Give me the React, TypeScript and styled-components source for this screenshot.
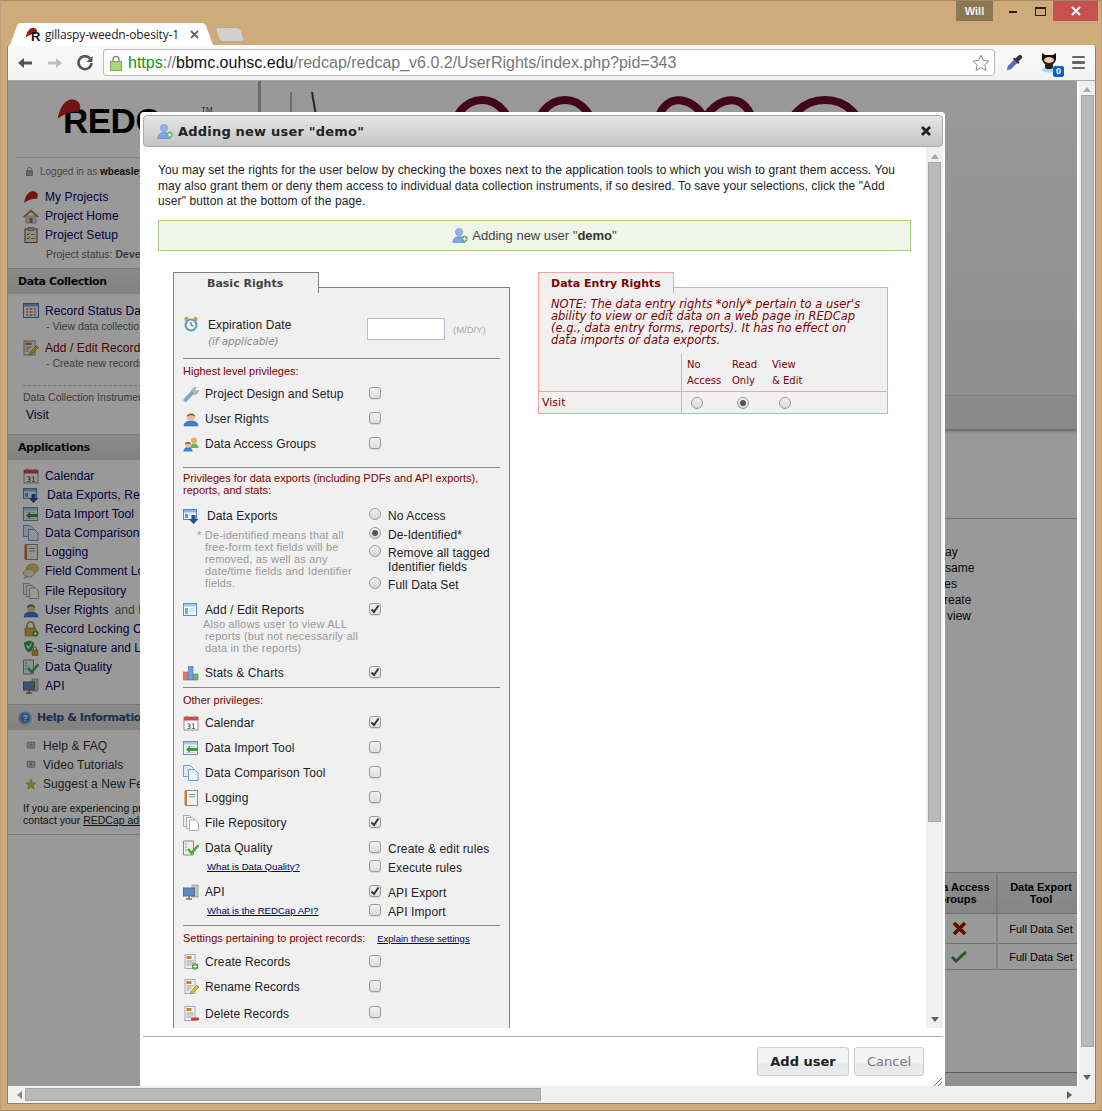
import { FC, ReactNode } from "react";
import styled, { createGlobalStyle } from "styled-components";

const SANS = `"Liberation Sans", Arial, sans-serif`;
const VERDANA = `"DejaVu Sans", Verdana, sans-serif`;

const GlobalStyle = createGlobalStyle`
  html, body { margin: 0; padding: 0; background: #cdab7b; }
  * { box-sizing: border-box; }
  body { font-family: ${SANS}; font-size: 12px; color: #000; }
`;

const HAT_PATH = "M1 14C2 9 4 4 8 2.500C11 1.500 15 3 15 7L13.500 10C10 9 5 11 1 14z";

const icons: Record<string, ReactNode> = {
  hat: <path d={HAT_PATH} fill="#8f1d1d" />,
  hatBright: <path d={HAT_PATH} fill="#c41e1e" />,
  userAdd: (
    <>
      <circle cx="7" cy="5" r="3.600" fill="#8fb2ea" stroke="#6f93d6" strokeWidth=".6" />
      <path d="M.8 15.500C1 11.500 3.500 9.500 7 9.500s6 2 6.200 6z" fill="#7fa3e3" stroke="#5b80c6" strokeWidth=".6" />
      <circle cx="12.600" cy="11.800" r="3" fill="#58b65a" />
      <path d="M12.600 10v3.600M10.800 11.800h3.600" stroke="#fff" strokeWidth="1.200" />
    </>
  ),
  clock: (
    <>
      <circle cx="3.500" cy="3" r="2.200" fill="#e0a030" />
      <circle cx="12.500" cy="3" r="2.200" fill="#e0a030" />
      <circle cx="8" cy="9" r="6.500" fill="#5b9bd8" />
      <circle cx="8" cy="9" r="4.400" fill="#f4f4f4" />
      <path d="M8 6v3l2.500 1" stroke="#555" fill="none" />
    </>
  ),
  wrench: (
    <>
      <path d="M2.500 14L9.500 6.500" stroke="#7ea2dc" strokeWidth="4" strokeLinecap="round" />
      <path d="M8.500 5.500C8.500 3 10.500 1 13.500 1.500L11.500 3.500 13 5.500 15.500 4C15.500 7 13 9 10.500 8.500z" fill="#b4b4b4" stroke="#888" strokeWidth=".5" />
    </>
  ),
  user: (
    <>
      <path d="M1 15c0-3.500 2.500-5 7-5s7 1.500 7 5z" fill="#3f7fd6" stroke="#2b5fa8" strokeWidth=".5" />
      <circle cx="8" cy="6" r="4" fill="#efbf9a" />
      <path d="M4 6C3.500 1.500 12.500 1.500 12 6 10 3.800 6 3.800 4 6z" fill="#8a4a22" />
    </>
  ),
  users: (
    <>
      <circle cx="11" cy="4.500" r="3" fill="#e8b060" />
      <path d="M7 12c0-3 2-4.500 4-4.500s4.500 1.500 4.500 4.500z" fill="#6cb45c" />
      <path d="M.5 15.500C.5 12.500 2.500 11 5 11s4.500 1.500 4.500 4.500z" fill="#3f7fd6" />
      <circle cx="5" cy="8.500" r="3" fill="#efbf9a" />
      <path d="M2 8.500C2 5 8 5 8 8.500 6.500 7 3.500 7 2 8.500z" fill="#8a4a22" />
    </>
  ),
  exports: (
    <>
      <rect x=".5" y="1.500" width="13" height="10" fill="#e8f0fa" stroke="#5a86c4" />
      <rect x="1" y="2" width="12" height="2.500" fill="#8fb2e0" />
      <rect x="2" y="6" width="3" height="4" fill="#6c94cc" />
      <path d="M8.500 7h4v4h3l-5 5-5-5h3z" fill="#2a4f8c" />
    </>
  ),
  report: (
    <>
      <rect x=".5" y="1.500" width="13" height="12" fill="#f4f8fd" stroke="#5a8cd0" />
      <rect x="1" y="2" width="12" height="2.500" fill="#a8c6ea" />
      <rect x="2" y="6" width="3" height="6" fill="#7ea8dc" />
      <path d="M6.500 7h5.500M6.500 9h5.500" stroke="#b8cfe8" />
    </>
  ),
  chart: (
    <>
      <rect x=".5" y="7" width="4.500" height="8" fill="#ef6f6f" stroke="#c44" strokeWidth=".6" />
      <rect x="5.500" y="1.500" width="4.500" height="13.500" fill="#6f9fe0" stroke="#3d6cb4" strokeWidth=".6" />
      <rect x="10.500" y="9" width="4.500" height="6" fill="#6cb46c" stroke="#3d8a3d" strokeWidth=".6" />
    </>
  ),
  calendar: (
    <>
      <rect x="1" y="2" width="14" height="13" fill="#fafafa" stroke="#777" strokeWidth=".8" />
      <rect x="1" y="2" width="14" height="3.500" fill="#e04444" />
      <path d="M4 .8v3M12 .8v3" stroke="#888" strokeWidth="1.200" />
      <text x="8" y="13.500" textAnchor="middle" fontSize="7.500" fontFamily="DejaVu Sans Mono, monospace" fill="#333">31</text>
    </>
  ),
  importTool: (
    <>
      <rect x=".5" y="1.500" width="14" height="13" fill="#eef4ea" stroke="#6f93b8" />
      <rect x="1" y="2" width="13" height="2.500" fill="#a8c6ea" />
      <path d="M3 6.500h9M3 12.500h9" stroke="#b8cfe8" />
      <path d="M15 8h-8V6L3 9.500 7 13v-2h8z" fill="#3f9a3f" />
    </>
  ),
  compare: (
    <>
      <path d="M.5.500h7l3 3v8h-10z" fill="#dbe8f8" stroke="#6f9ad4" />
      <path d="M5.500 4.500h6l3.500 3.500v7.500h-9.500z" fill="#eef4fc" stroke="#6f9ad4" />
    </>
  ),
  log: (
    <>
      <rect x="2.500" y=".5" width="12" height="15" fill="#f6f3ea" stroke="#8f8a7a" />
      <rect x="1.500" y="1" width="2.500" height="14" fill="#c67b3c" />
      <path d="M6 4.500h6M6 7h6" stroke="#6f9ad4" strokeWidth="1.200" />
    </>
  ),
  repo: (
    <>
      <path d="M.5.500h6l2 2v9h-8z" fill="#f2f2f2" stroke="#aaa" />
      <path d="M3.500 2.500h6l2 2v9h-8z" fill="#f8f8f8" stroke="#aaa" />
      <path d="M6.500 5h6l3 3v7.500h-9z" fill="#fff" stroke="#aaa" />
    </>
  ),
  quality: (
    <>
      <path d="M.5 1h10v14H.5z" fill="#eee" stroke="#888" />
      <path d="M2 4h2M2 7h2M2 10h2" stroke="#6f9ad4" />
      <path d="M5 9l3.500 4L15.500 5" stroke="#4caf3c" strokeWidth="2.600" fill="none" />
    </>
  ),
  api: (
    <>
      <rect x="9" y="1" width="6" height="12" fill="#c8c8c8" stroke="#888" strokeWidth=".7" />
      <rect x=".5" y="4" width="11" height="8" fill="#5a8cc8" stroke="#666" />
      <path d="M3 15h6M6 12v3" stroke="#777" strokeWidth="1.500" />
    </>
  ),
  recordAdd: (
    <>
      <rect x="2" y=".5" width="10" height="14" fill="#f4f2ec" stroke="#aaa" />
      <rect x="3.500" y="2" width="5" height="3" fill="#c8822c" />
      <path d="M3.500 7h7M3.500 9h7M3.500 11h5" stroke="#999" />
      <circle cx="12" cy="12.500" r="3.200" fill="#3fa33f" />
      <path d="M12 10.500v4M10 12.500h4" stroke="#fff" />
    </>
  ),
  recordEdit: (
    <>
      <rect x="2" y=".5" width="10" height="14" fill="#f4f2ec" stroke="#aaa" />
      <rect x="3.500" y="2" width="5" height="3" fill="#c8822c" />
      <path d="M3.500 7h7M3.500 9h5M3.500 11h3" stroke="#999" />
      <path d="M7 15l1-3 6-6 2 2-6 6z" fill="#e6b422" stroke="#8a6d1a" strokeWidth=".5" />
    </>
  ),
  recordDelete: (
    <>
      <rect x="2" y=".5" width="10" height="14" fill="#f4f2ec" stroke="#aaa" />
      <rect x="3.500" y="2" width="5" height="3" fill="#c8822c" />
      <path d="M3.500 7h7M3.500 9h7M3.500 11h5" stroke="#999" />
      <rect x="8" y="11.500" width="8" height="3" rx="1" fill="#d43c3c" />
    </>
  ),
  home: (
    <>
      <path d="M3 8h10v7H3z" fill="#ddd" stroke="#888" strokeWidth=".6" />
      <path d="M0 8.500L8 1.500l8 7-1.500 1L8 4 1.500 9.500z" fill="#c87a28" />
      <rect x="6.500" y="10" width="3" height="5" fill="#778" />
    </>
  ),
  clipboard: (
    <>
      <rect x="2" y="2" width="12" height="13.500" fill="#f0eadc" stroke="#7a4a20" />
      <rect x="5" y=".5" width="6" height="3" fill="#aaa" stroke="#666" strokeWidth=".5" />
      <path d="M4 7l1 1 1.500-2M4 11l1 1 1.500-2" stroke="#3a9a3a" fill="none" />
      <path d="M8 7.500h4M8 11.500h4" stroke="#888" />
    </>
  ),
  grid: (
    <>
      <rect x=".5" y=".5" width="15" height="14" fill="#f0f4fa" stroke="#4a78b8" />
      <rect x="1" y="1" width="14" height="2.500" fill="#7aa0d8" />
      <path d="M3 6h2M6.500 6h3M11 6h2M3 9h2M6.500 9h3M11 9h2M3 12h2M6.500 12h3M11 12h2" stroke="#c87a50" strokeWidth="1.400" />
    </>
  ),
  edit: (
    <>
      <rect x="1" y="1" width="11" height="14" fill="#f4f2ec" stroke="#888" />
      <rect x="2.500" y="2.500" width="6" height="2.500" fill="#b87a30" />
      <path d="M2.500 7h7M2.500 9h5M2.500 11h3" stroke="#999" />
      <path d="M6 15.500l1-3.500 6.500-6.500 2 2L9 14z" fill="#e6b422" stroke="#8a6d1a" strokeWidth=".5" />
    </>
  ),
  comment: (
    <>
      <ellipse cx="9.500" cy="5.500" rx="6" ry="4.500" fill="#e8c868" stroke="#a08a40" strokeWidth=".7" />
      <ellipse cx="6" cy="10" rx="5.500" ry="4" fill="#f4e8c8" stroke="#a08a40" strokeWidth=".7" />
      <path d="M3 13l-2 2.500 4-1.500z" fill="#f4e8c8" stroke="#a08a40" strokeWidth=".5" />
    </>
  ),
  lockAdd: (
    <>
      <path d="M4 7V4.500a3.500 3.500 0 0 1 7 0V7" stroke="#a08a40" strokeWidth="1.500" fill="none" />
      <rect x="2" y="7" width="11" height="8" fill="#d8b048" stroke="#8a6d1a" strokeWidth=".6" />
      <circle cx="12.500" cy="12.500" r="3" fill="#3fa33f" />
      <path d="M12.500 10.800v3.400M10.800 12.500h3.400" stroke="#fff" />
    </>
  ),
  shield: (
    <>
      <path d="M1 2.500L6 .5l5 2c0 5-2 8-5 10-3-2-5-5-5-10z" fill="#3aa04a" />
      <path d="M3.500 5.500L5.500 8 8.500 3.500" stroke="#fff" strokeWidth="1.300" fill="none" />
      <rect x="9" y="10" width="6" height="5.500" fill="#c8a040" stroke="#8a6d1a" strokeWidth=".5" />
      <path d="M10.500 10V8.500a1.500 1.500 0 0 1 3 0V10" stroke="#8a6d1a" fill="none" />
    </>
  ),
  help: (
    <>
      <circle cx="8" cy="8" r="7.500" fill="#7ea8dc" />
      <circle cx="8" cy="8" r="5" fill="#4f7fc0" />
      <text x="8" y="11.500" textAnchor="middle" fontSize="10" fontWeight="700" fontFamily="Liberation Sans, sans-serif" fill="#fff">?</text>
    </>
  ),
  doc: (
    <>
      <rect x="3" y="3" width="10" height="8" rx="1" fill="#d8d8d8" stroke="#777" />
      <path d="M5 5.500h6M5 8h6" stroke="#777" />
    </>
  ),
  film: (
    <>
      <rect x="3" y="3" width="10" height="8" rx="1" fill="#d8d8d8" stroke="#777" />
      <path d="M8 4.500v5M5.500 7h5" stroke="#777" />
    </>
  ),
  star: <path d="M8 1.500l2 4.500 4.800.5-3.600 3.200 1 4.800L8 12.100 3.800 14.500l1-4.800L1.200 6.500 6 6z" fill="#e0c040" stroke="#a08a20" strokeWidth=".5" />,
  padlock: (
    <>
      <path d="M5 7V5a3 3 0 0 1 6 0v2" stroke="#777" fill="none" />
      <rect x="3.500" y="7" width="9" height="7" fill="#aaa" stroke="#777" />
    </>
  ),
};

const IconBox = styled.svg<{ $size: number }>`
  width: ${(p) => p.$size}px;
  height: ${(p) => p.$size}px;
  flex: none;
  display: block;
`;

const Icon: FC<{ name: string; size?: number }> = ({ name, size = 16 }) => (
  <IconBox viewBox="0 0 16 16" $size={size}>
    {icons[name]}
  </IconBox>
);

const Window = styled.div`
  width: 1102px;
  height: 1111px;
  background: #cdab7b;
  border: 1px solid #a08a66;
  border-left-color: #b9a07a;
  border-right-color: #b9a07a;
  overflow: hidden;
`;

const TabStrip = styled.div`
  height: 44px;
  display: flex;
  justify-content: space-between;
  padding-left: 19px;
  padding-right: 3px;
`;

const Tabs = styled.div`
  display: flex;
  align-items: flex-end;
`;

const Tab = styled.div`
  position: relative;
  width: 182px;
  height: 22px;
  background: #fff;
  display: flex;
  align-items: center;
  padding-left: 5px;
  font-size: 12px;
  color: #333;
  &::before,
  &::after {
    content: "";
    position: absolute;
    top: 0;
    bottom: 0;
    width: 14px;
    background: #fff;
    border-radius: 3px 3px 0 0;
  }
  &::before {
    left: -6px;
    transform: skewX(-20deg);
  }
  &::after {
    right: -7px;
    transform: skewX(20deg);
  }
`;

const Favicon = styled.span`
  position: relative;
  width: 16px;
  height: 16px;
  z-index: 1;
  flex: none;
`;

const FaviconLetter = styled.span`
  position: absolute;
  left: 6px;
  top: 3px;
  font: bold 13px ${SANS};
  color: #111;
`;

const TabTitle = styled.span`
  position: relative;
  z-index: 1;
  margin-left: 4px;
  width: 136px;
  white-space: nowrap;
  overflow: hidden;
  font-family: "Open Sans", sans-serif;
  font-size: 12px;
  letter-spacing: -0.15px;
  color: #222;
`;

const TabClose = styled.svg`
  position: relative;
  z-index: 1;
  width: 9px;
  height: 9px;
  margin-left: 9px;
`;

const NewTab = styled.div`
  width: 26px;
  height: 15px;
  margin: 0 0 3px 15px;
  background: #d2d2ca;
  border: 1px solid #b8aa90;
  border-radius: 3px;
  transform: skewX(20deg);
`;

const WindowControls = styled.div`
  display: flex;
  height: 20px;
  align-items: stretch;
`;

const UserBadge = styled.div`
  width: 37px;
  background: #8d7654;
  color: #eee;
  font: bold 11px/20px ${SANS};
  text-align: center;
`;

const ControlButton = styled.div<{ $width: number }>`
  width: ${(p) => p.$width}px;
  display: flex;
  align-items: center;
  justify-content: center;
`;

const CloseButton = styled(ControlButton)`
  background: #c75050;
  margin-left: 6px;
`;

const Frame = styled.div`
  margin-left: 6px;
  width: 1089px;
  border: 1px solid #94805f;
  border-top: 0;
  border-radius: 3px 3px 0 0;
  background: #f0f0f0;
`;

const Toolbar = styled.div`
  height: 36px;
  display: flex;
  align-items: center;
  padding-left: 9px;
  background: linear-gradient(#fafafa, #f2f2f2);
  border-bottom: 1px solid #a8a8a8;
  border-top-right-radius: 3px;
  border-top-left-radius: 3px;
`;

const NavIcon = styled.svg`
  width: 16px;
  height: 16px;
  margin-right: 14px;
  flex: none;
`;

const UrlBar = styled.div`
  width: 892px;
  height: 27px;
  margin-left: -4px;
  padding: 0 4px 0 6px;
  background: #fff;
  border: 1px solid #bdbdbd;
  border-radius: 3px;
  display: flex;
  align-items: center;
  font: 16px ${SANS};
  color: #777;
`;

const LockIcon = styled.svg`
  width: 12px;
  height: 16px;
  margin-right: 6px;
`;

const Scheme = styled.span`
  color: #0a9a0a;
`;

const Host = styled.span`
  color: #111;
`;

const UrlText = styled.span`
  flex: 1;
  white-space: nowrap;
`;

const Extensions = styled.div`
  display: flex;
  align-items: center;
  margin-left: 10px;
`;

const Octo = styled.div`
  position: relative;
  width: 22px;
  height: 24px;
  margin: 0 11px 0 16px;
`;

const OctoCount = styled.span`
  position: absolute;
  right: -3px;
  bottom: -2px;
  width: 11px;
  height: 11px;
  background: #0a62c8;
  border-radius: 2px;
  color: #fff;
  font: bold 9px/11px ${SANS};
  text-align: center;
`;

const MenuBars = styled.div`
  width: 13px;
  display: flex;
  flex-direction: column;
  gap: 3px;
`;

const MenuBar = styled.i`
  display: block;
  height: 2.5px;
  background: #666;
  border-radius: 1px;
`;

const ViewportRow = styled.div`
  display: flex;
  height: 1005px;
`;

const Page = styled.div`
  position: relative;
  width: 1069px;
  height: 1005px;
  background: #fff;
  overflow: hidden;
  display: flex;
`;

const Overlay = styled.div`
  position: absolute;
  inset: 0;
  background: rgba(0, 0, 0, 0.4);
`;

const Scrollbar = styled.div`
  flex: none;
  width: 18px;
  background: #f0f0f0;
  display: flex;
  flex-direction: column;
  align-items: center;
  padding-top: 6px;
  border-left: 2px solid #fff;
`;

const ArrowUp = styled.i`
  width: 0;
  height: 0;
  border: 4px solid transparent;
  border-top: 0;
  border-bottom: 5px solid #a8a8a8;
  margin-bottom: 3px;
`;

const ArrowDown = styled.i`
  width: 0;
  height: 0;
  border: 4px solid transparent;
  border-bottom: 0;
  border-top: 5px solid #606060;
`;

const PageThumb = styled.div`
  width: 13px;
  height: 952px;
  margin-bottom: 28px;
  background: #b9b9b9;
  border: 1px solid #a6a6a6;
`;

const HScrollbar = styled.div`
  height: 17px;
  display: flex;
  align-items: center;
  padding-left: 9px;
  background: #f0f0f0;
`;

const ArrowLeft = styled.i`
  width: 0;
  height: 0;
  border: 4px solid transparent;
  border-left: 0;
  border-right: 5px solid #8a8a8a;
  margin-right: 3px;
`;

const ArrowRight = styled.i`
  width: 0;
  height: 0;
  border: 4px solid transparent;
  border-right: 0;
  border-left: 5px solid #606060;
  margin-left: 526px;
`;

const HThumb = styled.div`
  width: 516px;
  height: 13px;
  background: #b9b9b9;
  border: 1px solid #a6a6a6;
`;

const Sidebar = styled.aside`
  flex: none;
  width: 253px;
  height: 100%;
  background: #fff;
  border-right: 3px solid #b4b4b4;
`;

const LogoArea = styled.div`
  position: relative;
  height: 77px;
  margin: 0 6px 0 8px;
  border-bottom: 1px solid #ddd;
`;

const LogoWord = styled.div`
  position: absolute;
  left: 47px;
  top: 20px;
  font: bold 35px/40px ${SANS};
  letter-spacing: -0.5px;
  color: #000;
`;

const LogoHat = styled.div`
  position: absolute;
  left: 40px;
  top: 15px;
`;

const LogoMark = styled.sup`
  position: absolute;
  left: 185px;
  top: 24px;
  font: 8px ${SANS};
  color: #444;
`;

const LoggedIn = styled.div`
  display: flex;
  align-items: center;
  gap: 5px;
  height: 14px;
  margin: 6px 0 9px 16px;
  font-size: 10px;
  color: #777;
  white-space: nowrap;
  b {
    color: #222;
  }
`;

const SideRow = styled.div<{ $color?: string; $indent?: number; $top?: number; $textGap?: number; $h?: number }>`
  display: flex;
  align-items: center;
  height: ${(p) => p.$h ?? 19}px;
  margin-top: ${(p) => p.$top ?? 0}px;
  padding-left: ${(p) => p.$indent ?? 15}px;
  color: ${(p) => p.$color ?? "#000066"};
  font-size: 12px;
  letter-spacing: 0.08px;
  white-space: nowrap;
  svg {
    margin-right: ${(p) => p.$textGap ?? 6}px;
  }
`;

const Muted = styled.span`
  color: #666;
  margin-left: 6px;
`;

const SideSmall = styled.div<{ $top?: number; $left?: number }>`
  font-size: 10.5px;
  line-height: 12px;
  color: #666;
  margin-top: ${(p) => p.$top ?? 0}px;
  padding-left: ${(p) => p.$left ?? 38}px;
  white-space: nowrap;
`;

const SideHeader = styled.div<{ $top: number; $color?: string }>`
  height: 26px;
  margin-top: ${(p) => p.$top}px;
  padding-left: 10px;
  border-top: 1px solid #ccc;
  background: linear-gradient(#e6e6e6, #d8d8d8);
  display: flex;
  align-items: center;
  gap: 5px;
  font: bold 11px ${VERDANA};
  letter-spacing: -0.4px;
  color: ${(p) => p.$color ?? "#111"};
  white-space: nowrap;
`;

const SideList = styled.div<{ $top: number }>`
  margin-top: ${(p) => p.$top}px;
`;

const Dashed = styled.div`
  margin: 16px 0 0 15px;
  border-top: 1px dashed #bbb;
`;

const SideParagraph = styled.div`
  margin: 9px 0 0 15px;
  font-size: 10.5px;
  line-height: 12px;
  color: #222;
  white-space: nowrap;
`;

const SideRule = styled.div`
  margin-top: 8px;
  border-top: 1px solid #ccc;
`;

const Main = styled.main`
  flex: 1;
  min-width: 0;
  display: flex;
  flex-direction: column;
`;

const Banner = styled.div`
  height: 315px;
  background: linear-gradient(#fff, #eee);
  border-bottom: 1px solid #ddd;
`;

const BannerArt = styled.svg`
  display: block;
  width: 816px;
  height: 40px;
`;

const Strip = styled.div`
  height: 33px;
  background: #e8e8e8;
  box-shadow: 0 2px 3px rgba(0, 0, 0, 0.35);
`;

const SectionRule = styled.div`
  margin-top: 89px;
  border-top: 1px solid #bbb;
`;

const NotesBlock = styled.div`
  margin: 25px 0 0 669px;
  font-size: 12px;
  line-height: 16px;
  color: #111;
  white-space: nowrap;
`;

const NoteLine = styled.div<{ $indent: number }>`
  margin-left: ${(p) => p.$indent}px;
`;

const UsersTable = styled.div`
  margin: 248px -9px 0 auto;
  width: 168px;
  display: grid;
  grid-template-columns: 80px 88px;
  font-size: 11px;
  flex: none;
`;

const HeadCell = styled.div`
  height: 42px;
  background: linear-gradient(#eee, #ddd);
  border-top: 1px solid #bbb;
  border-bottom: 1px solid #bbb;
  border-right: 2px solid #ccc;
  display: flex;
  align-items: center;
  justify-content: center;
  text-align: center;
  font-weight: bold;
  line-height: 12px;
`;

const BodyCell = styled.div<{ $height: number; $shift?: number }>`
  height: ${(p) => p.$height}px;
  padding-left: ${(p) => p.$shift ?? 0}px;
  border-bottom: 1px solid #bbb;
  border-right: 2px solid #ddd;
  display: flex;
  align-items: center;
  justify-content: center;
`;

const PageFoot = styled.div`
  margin-top: auto;
  height: 14px;
  background: #f0f0f0;
  border-top: 1px solid #999;
`;

const Dialog = styled.section`
  position: absolute;
  left: 132px;
  top: 31px;
  width: 805px;
  height: 974px;
  padding: 3px 2px 0 3px;
  background: #fff;
  border-radius: 4px 4px 0 0;
  display: flex;
  flex-direction: column;
`;

const TitleBar = styled.header`
  flex: none;
  height: 32px;
  padding: 0 11px 0 13px;
  background: linear-gradient(#e6e6e6, #c4c4c4);
  border: 1px solid #aaa;
  border-radius: 4px;
  display: flex;
  align-items: center;
  justify-content: space-between;
`;

const TitleText = styled.h1`
  margin: 0;
  display: flex;
  align-items: center;
  gap: 5px;
  font: bold 13px ${VERDANA};
  letter-spacing: 0.2px;
  color: #222;
`;

const DialogBody = styled.div`
  height: 881px;
  flex: none;
  display: flex;
`;

const ScrollPane = styled.div`
  flex: 1;
  min-width: 0;
  overflow: hidden;
  padding: 15px 0 0 15px;
`;

const PaneScrollbar = styled.div`
  flex: none;
  width: 17px;
  background: #f0f0f0;
  display: flex;
  flex-direction: column;
  align-items: center;
  padding-top: 7px;
`;

const PaneThumb = styled.div`
  width: 13px;
  height: 660px;
  margin-bottom: 195px;
  background: #b9b9b9;
  border: 1px solid #a6a6a6;
`;

const Intro = styled.p`
  margin: 0;
  padding-top: 1px;
  font-size: 12px;
  line-height: 15.5px;
  letter-spacing: 0.075px;
  color: #222;
  white-space: nowrap;
`;

const GreenBox = styled.div`
  width: 753px;
  height: 31px;
  margin-top: 10px;
  background: #eff6e8;
  border: 1px solid #a6d07e;
  display: flex;
  align-items: center;
  justify-content: center;
  gap: 4px;
  font-size: 13px;
  color: #444;
  b {
    color: #333;
  }
`;

const Columns = styled.div`
  display: flex;
  align-items: flex-start;
  gap: 28px;
  margin: 21px 0 0 15px;
`;

const RightsTab = styled.div<{ $width: number; $danger?: boolean }>`
  position: relative;
  z-index: 1;
  width: ${(p) => p.$width}px;
  height: 21px;
  margin-bottom: -6px;
  background: #f0f0f0;
  border: 1px solid ${(p) => (p.$danger ? "#f5a3a3" : "#808080")};
  border-bottom: 0;
  font: bold 11px/21px ${VERDANA};
  color: ${(p) => (p.$danger ? "#800000" : "#444")};
  padding-left: ${(p) => (p.$danger ? 12 : 33)}px;
  white-space: nowrap;
`;

const BasicColumn = styled.div`
  flex: none;
  width: 337px;
`;

const EntryColumn = styled.div`
  flex: none;
  width: 350px;
`;

const BasicPanel = styled.div`
  background: #f0f0f0;
  border: 1px solid #808080;
  padding: 28px 9px 60px;
`;

const ExpireRow = styled.div`
  display: flex;
  align-items: flex-start;
  height: 34px;
`;

const ExpireText = styled.div`
  margin-left: 9px;
  width: 159px;
  font-size: 12px;
  line-height: 18px;
  letter-spacing: 0.1px;
  color: #222;
`;

const Hint = styled.div`
  font: italic 10.5px/14px ${VERDANA};
  letter-spacing: -0.1px;
  color: #888;
`;

const DateInput = styled.div`
  width: 78px;
  height: 22px;
  margin-top: 2px;
  background: #fff;
  border: 1px solid #b8bcd0;
`;

const DateFormat = styled.span`
  margin: 7px 0 0 8px;
  font-size: 9.5px;
  line-height: 14px;
  color: #aaa;
`;

const Rule = styled.hr<{ $top: number }>`
  margin: ${(p) => p.$top}px 0 0;
  border: 0;
  border-top: 1px solid #888;
`;

const Heading = styled.div<{ $top: number }>`
  margin-top: ${(p) => p.$top}px;
  font-size: 11px;
  line-height: 12px;
  color: #800000;
  white-space: nowrap;
`;

const HeadingLink = styled.a`
  margin-left: 12px;
  font-size: 9.5px;
  color: #000066;
  text-decoration: underline;
`;

const RowGroup = styled.div<{ $top: number }>`
  margin-top: ${(p) => p.$top}px;
`;

const Right = styled.div<{ $top?: number; $h?: number }>`
  display: grid;
  grid-template-columns: 186px 1fr;
  margin-top: ${(p) => p.$top ?? 0}px;
  ${(p) => (p.$h ? `height: ${p.$h}px; align-items: center;` : "")}
`;

const RightLabel = styled.div<{ $gap?: number }>`
  display: flex;
  align-items: center;
  height: 16px;
  gap: ${(p) => p.$gap ?? 6}px;
  font-size: 12px;
  letter-spacing: 0.1px;
  color: #222;
  white-space: nowrap;
`;

const Note = styled.div<{ $indent: number; $top: number }>`
  margin-top: ${(p) => p.$top}px;
  padding-left: 22px;
  text-indent: -${(p) => p.$indent}px;
  font-size: 11px;
  line-height: 12px;
  letter-spacing: 0.2px;
  color: #999;
  white-space: nowrap;
`;

const SmallLink = styled.a`
  display: block;
  margin: 5px 0 0 24px;
  font-size: 9.6px;
  line-height: 12px;
  color: #000066;
  text-decoration: underline;
  white-space: nowrap;
`;

const Options = styled.div<{ $top?: number }>`
  display: flex;
  flex-direction: column;
  gap: 3px;
  margin-top: ${(p) => p.$top ?? 0}px;
`;

const Option = styled.div<{ $multi?: boolean }>`
  display: flex;
  align-items: flex-start;
  gap: 7px;
  font-size: 12px;
  line-height: 14px;
  letter-spacing: 0.1px;
  padding: ${(p) => (p.$multi ? 0 : 1)}px 0;
  color: #222;
  white-space: nowrap;
`;

const BoxShell = styled.span<{ $nudge: number }>`
  flex: none;
  display: block;
  width: 12px;
  height: 12px;
  border: 1px solid #9a9a9a;
  border-radius: 3px;
  background: linear-gradient(#f2f2f2, #dedede);
  box-shadow: 0 1px 1px rgba(0, 0, 0, 0.1);
  margin-top: ${(p) => p.$nudge}px;
`;

const BoxTick = styled.svg`
  display: block;
  width: 10px;
  height: 10px;
`;

const RadioShell = styled.span<{ $on?: boolean }>`
  flex: none;
  display: flex;
  align-items: center;
  justify-content: center;
  width: 12px;
  height: 12px;
  margin-top: -1px;
  border: 1px solid #9a9a9a;
  border-radius: 50%;
  background: linear-gradient(#f2f2f2, #d8d8d8);
  &::after {
    content: "";
    display: ${(p) => (p.$on ? "block" : "none")};
    width: 6px;
    height: 6px;
    border-radius: 50%;
    background: #555;
  }
`;

const CheckBox: FC<{ on?: boolean; nudge?: number }> = ({ on, nudge = -1 }) => (
  <BoxShell $nudge={nudge}>
    {on && (
      <BoxTick viewBox="0 0 10 10">
        <path d="M1.500 5.500L4 8 8.500 1.500" stroke="#333" strokeWidth="2" fill="none" />
      </BoxTick>
    )}
  </BoxShell>
);

const EntryPanel = styled.div`
  background: #f0f0f0;
  border: 1px solid #f5a3a3;
`;

const EntryNote = styled.div`
  padding: 10px 0 0 12px;
  height: 66px;
  font: italic 11.5px/12px ${VERDANA};
  color: #800000;
  white-space: nowrap;
`;

const EntryGrid = styled.div`
  display: grid;
  grid-template-columns: 143px 1fr;
  font: 10px ${VERDANA};
  color: #800000;
`;

const EntryLabelCell = styled.div<{ $line?: boolean }>`
  border-right: 1px solid #f5a3a3;
  ${(p) => (p.$line ? "border-top: 1px solid #f5a3a3; padding-left: 3px; font-size: 11px; display:flex; align-items:center;" : "")}
`;

const EntryHeads = styled.div`
  height: 37px;
  display: grid;
  grid-template-columns: 45px 40px 60px;
  padding: 3px 0 0 5px;
  line-height: 16px;
`;

const EntryRadios = styled.div`
  height: 22px;
  border-top: 1px solid #f5a3a3;
  display: grid;
  grid-template-columns: 46px 42px 40px;
  align-items: center;
  padding: 2px 0 0 9px;
`;

const DialogFoot = styled.footer`
  flex: none;
  height: 50px;
  margin-top: 8px;
  border-top: 1px solid #aaa;
  padding: 10px 19px 0 0;
  display: flex;
  justify-content: flex-end;
  gap: 5px;
  position: relative;
`;

const Button = styled.button<{ $primary?: boolean }>`
  height: 29px;
  width: ${(p) => (p.$primary ? 92 : 70)}px;
  padding: 0;
  background: linear-gradient(#f4f4f4 55%, #e6e6e6 60%, #ececec);
  border: 1px solid #ccc;
  border-radius: 3px;
  font: ${(p) => (p.$primary ? "bold" : "normal")} 13px ${VERDANA};
  color: ${(p) => (p.$primary ? "#222" : "#777")};
`;

const Grip = styled.svg`
  position: absolute;
  right: 1px;
  bottom: 0;
  width: 8px;
  height: 8px;
`;

interface RowItem {
  icon: string;
  label: string;
  on?: boolean;
  h?: number;
  nudge?: number;
}

const highLevel: RowItem[] = [
  { icon: "wrench", label: "Project Design and Setup" },
  { icon: "user", label: "User Rights" },
  { icon: "users", label: "Data Access Groups" },
];

const otherPrivileges: RowItem[] = [
  { icon: "calendar", label: "Calendar", on: true },
  { icon: "importTool", label: "Data Import Tool" },
  { icon: "compare", label: "Data Comparison Tool" },
  { icon: "log", label: "Logging" },
  { icon: "repo", label: "File Repository", on: true },
];

const recordRows: RowItem[] = [
  { icon: "recordAdd", label: "Create Records" },
  { icon: "recordEdit", label: "Rename Records" },
  { icon: "recordDelete", label: "Delete Records", h: 29, nudge: -5 },
];

const appLinks = [
  { icon: "calendar", label: "Calendar" },
  { icon: "exports", label: "Data Exports, Reports, and Stats", textGap: 8 },
  { icon: "importTool", label: "Data Import Tool" },
  { icon: "compare", label: "Data Comparison Tool" },
  { icon: "log", label: "Logging" },
  { icon: "comment", label: "Field Comment Log" },
  { icon: "repo", label: "File Repository" },
  { icon: "user", label: "User Rights", extra: "and DAGs" },
  { icon: "lockAdd", label: "Record Locking Customization" },
  { icon: "shield", label: "E-signature and Locking Management" },
  { icon: "quality", label: "Data Quality" },
  { icon: "api", label: "API" },
];

const PlainRow: FC<RowItem> = ({ icon, label, on, h = 25, nudge = -3 }) => (
  <Right $h={h}>
    <RightLabel>
      <Icon name={icon} />
      {label}
    </RightLabel>
    <CheckBox on={on} nudge={nudge} />
  </Right>
);

export default function App() {
  return (
    <Window>
      <GlobalStyle />
      <TabStrip>
        <Tabs>
          <Tab>
            <Favicon>
              <Icon name="hat" size={13} />
              <FaviconLetter>R</FaviconLetter>
            </Favicon>
            <TabTitle>gillaspy-weedn-obesity-1</TabTitle>
            <TabClose viewBox="0 0 9 9">
              <path d="M1 1l7 7M8 1L1 8" stroke="#666" strokeWidth="1.800" />
            </TabClose>
          </Tab>
          <NewTab />
        </Tabs>
        <WindowControls>
          <UserBadge>Will</UserBadge>
          <ControlButton $width={40}>
            <svg width="9" height="3" viewBox="0 0 9 3">
              <rect width="8" height="2" y="1" fill="#222" />
            </svg>
          </ControlButton>
          <ControlButton $width={14}>
            <svg width="11" height="9" viewBox="0 0 11 9">
              <rect x=".5" y=".5" width="10" height="8" fill="none" stroke="#222" />
              <rect width="11" height="2" fill="#222" />
            </svg>
          </ControlButton>
          <CloseButton $width={45}>
            <svg width="10" height="10" viewBox="0 0 10 10">
              <path d="M1 1l8 8M9 1L1 9" stroke="#fff" strokeWidth="2" />
            </svg>
          </CloseButton>
        </WindowControls>
      </TabStrip>
      <Frame>
        <Toolbar>
          <NavIcon viewBox="0 0 16 16">
            <path d="M15 6.500H7V3L1 8l6 5V9.500h8z" fill="#555" />
          </NavIcon>
          <NavIcon viewBox="0 0 16 16">
            <path d="M1 6.500h8V3l6 5-6 5V9.500H1z" fill="#c0c0c0" />
          </NavIcon>
          <NavIcon viewBox="0 0 16 16">
            <path d="M13 3.500A6.500 6.500 0 1 0 14.500 8" stroke="#555" strokeWidth="2.600" fill="none" />
            <path d="M15.500 1v6h-6z" fill="#555" />
          </NavIcon>
          <UrlBar>
            <LockIcon viewBox="0 0 12 16">
              <path d="M3 7V4.500a3 3 0 0 1 6 0V7" stroke="#888" strokeWidth="1.400" fill="none" />
              <rect x=".5" y="6.500" width="11" height="9" fill="#a8d878" stroke="#7aa850" />
            </LockIcon>
            <UrlText>
              <Scheme>https</Scheme>://<Host>bbmc.ouhsc.edu</Host>/redcap/redcap_v6.0.2/UserRights/index.php?pid=343
            </UrlText>
            <svg width="18" height="18" viewBox="0 0 18 18">
              <path d="M9 1.200l2.400 5.200 5.600.6-4.200 3.800 1.200 5.600L9 13.600l-5 2.800 1.200-5.600L1 7l5.600-.6z" fill="#fff" stroke="#888" />
            </svg>
          </UrlBar>
          <Extensions>
            <svg width="18" height="18" viewBox="0 0 18 18">
              <path d="M2 16l1-4 6-6 3 3-6 6z" fill="#4a6fd0" stroke="#888" strokeWidth=".6" />
              <path d="M8 5l5 5 1.500-1.500-1-1 3-3a2 2 0 0 0-3-3l-3 3-1-1z" fill="#333" />
            </svg>
            <Octo>
              <svg width="22" height="22" viewBox="0 0 22 22">
                <ellipse cx="10" cy="19" rx="7" ry="2.500" fill="#a8d8f0" />
                <path d="M3 2l3 2h8l3-2v6a7 6 0 0 1-14 0z" fill="#111" />
                <ellipse cx="10" cy="9" rx="5" ry="3" fill="#f4c8a8" />
                <rect x="6" y="12" width="8" height="6" rx="2" fill="#222" />
              </svg>
              <OctoCount>0</OctoCount>
            </Octo>
            <MenuBars>
              <MenuBar />
              <MenuBar />
              <MenuBar />
            </MenuBars>
          </Extensions>
        </Toolbar>
        <ViewportRow>
          <Page>
            <Sidebar>
              <LogoArea>
                <LogoWord>REDCap</LogoWord>
                <LogoHat>
                  <Icon name="hatBright" size={26} />
                </LogoHat>
                <LogoMark>TM</LogoMark>
              </LogoArea>
              <LoggedIn>
                <Icon name="padlock" size={11} />
                <span>
                  Logged in as <b>wbeasley</b>
                </span>
              </LoggedIn>
              <SideRow>
                <Icon name="hatBright" />
                My Projects
              </SideRow>
              <SideRow>
                <Icon name="home" />
                Project Home
              </SideRow>
              <SideRow>
                <Icon name="clipboard" />
                Project Setup
              </SideRow>
              <SideSmall $top={4}>
                Project status: <b>Development</b>
              </SideSmall>
              <SideHeader $top={8}>Data Collection</SideHeader>
              <SideRow $top={7}>
                <Icon name="grid" />
                Record Status Dashboard
              </SideRow>
              <SideSmall>- View data collection status</SideSmall>
              <SideRow $color="#800000" $top={6}>
                <Icon name="edit" />
                Add / Edit Records
              </SideRow>
              <SideSmall>- Create new records or edit</SideSmall>
              <Dashed />
              <SideSmall $top={5} $left={15}>
                Data Collection Instruments:
              </SideSmall>
              <SideRow $indent={18} $top={2}>
                Visit
              </SideRow>
              <SideHeader $top={10}>Applications</SideHeader>
              <SideList $top={6}>
                {appLinks.map((link) => (
                  <SideRow key={link.label} $textGap={link.textGap} $h={19.18}>
                    <Icon name={link.icon} />
                    {link.label}
                    {link.extra && <Muted>{link.extra}</Muted>}
                  </SideRow>
                ))}
              </SideList>
              <SideHeader $top={8} $color="#305080">
                <Icon name="help" size={14} />
                Help &amp; Information
              </SideHeader>
              <SideList $top={6}>
                <SideRow $color="#333" $indent={17}>
                  <Icon name="doc" size={12} />
                  Help &amp; FAQ
                </SideRow>
                <SideRow $color="#333" $indent={17}>
                  <Icon name="film" size={12} />
                  Video Tutorials
                </SideRow>
                <SideRow $color="#333" $indent={17}>
                  <Icon name="star" size={12} />
                  Suggest a New Feature
                </SideRow>
              </SideList>
              <SideParagraph>
                If you are experiencing problems,
                <br />
                contact your <u>REDCap administrator</u>
              </SideParagraph>
              <SideRule />
            </Sidebar>
            <Main>
              <Banner>
                <BannerArt viewBox="0 0 816 40">
                  <path d="M30 11v30" stroke="#777" strokeWidth="1" />
                  <path d="M51 11l5 30" stroke="#444" strokeWidth="2" />
                  <g fill="none" stroke="#6f0a2a" strokeWidth="8">
                    <ellipse cx="221" cy="55" rx="30" ry="36" />
                    <ellipse cx="304" cy="55" rx="30" ry="36" />
                    <path d="M396 44c4-32 34-32 48-6 14-26 44-26 48 6" />
                    <ellipse cx="564" cy="55" rx="38" ry="36" />
                  </g>
                </BannerArt>
              </Banner>
              <Strip />
              <SectionRule />
              <NotesBlock>
                <NoteLine $indent={5}>may</NoteLine>
                <NoteLine $indent={15}>same</NoteLine>
                <NoteLine $indent={1}>roles</NoteLine>
                <NoteLine $indent={8}>create</NoteLine>
                <NoteLine $indent={17}>view</NoteLine>
              </NotesBlock>
              <UsersTable>
                <HeadCell>
                  Data Access
                  <br />
                  Groups
                </HeadCell>
                <HeadCell>
                  Data Export
                  <br />
                  Tool
                </HeadCell>
                <BodyCell $height={30} $shift={4}>
                  <svg width="15" height="15" viewBox="0 0 15 15">
                    <path d="M2 2l11 11M13 2L2 13" stroke="#a01010" strokeWidth="3.600" />
                  </svg>
                </BodyCell>
                <BodyCell $height={30}>Full Data Set</BodyCell>
                <BodyCell $height={26} $shift={4}>
                  <svg width="16" height="13" viewBox="0 0 16 13">
                    <path d="M1 7l4 4L15 2" stroke="#3f8f3f" strokeWidth="2.800" fill="none" />
                  </svg>
                </BodyCell>
                <BodyCell $height={26}>Full Data Set</BodyCell>
              </UsersTable>
              <PageFoot />
            </Main>
            <Overlay />
            <Dialog>
              <TitleBar>
                <TitleText>
                  <Icon name="userAdd" />
                  Adding new user "demo"
                </TitleText>
                <svg width="10" height="10" viewBox="0 0 10 10">
                  <path d="M1 1l8 8M9 1L1 9" stroke="#222" strokeWidth="2.800" />
                </svg>
              </TitleBar>
              <DialogBody>
                <ScrollPane>
                  <Intro>
                    You may set the rights for the user below by checking the boxes next to the application tools to which you wish to grant them access. You
                    <br />
                    may also grant them or deny them access to individual data collection instruments, if so desired. To save your selections, click the "Add
                    <br />
                    user" button at the bottom of the page.
                  </Intro>
                  <GreenBox>
                    <Icon name="userAdd" />
                    <span>
                      Adding new user "<b>demo</b>"
                    </span>
                  </GreenBox>
                  <Columns>
                    <BasicColumn>
                      <RightsTab $width={146}>Basic Rights</RightsTab>
                      <BasicPanel>
                        <ExpireRow>
                          <Icon name="clock" />
                          <ExpireText>
                            Expiration Date
                            <Hint>(if applicable)</Hint>
                          </ExpireText>
                          <DateInput />
                          <DateFormat>(M/D/Y)</DateFormat>
                        </ExpireRow>
                        <Rule $top={8} />
                        <Heading $top={6}>Highest level privileges:</Heading>
                        <RowGroup $top={5}>
                          {highLevel.map((row) => (
                            <PlainRow key={row.label} {...row} />
                          ))}
                        </RowGroup>
                        <Rule $top={10} />
                        <Heading $top={4}>
                          Privileges for data exports (including PDFs and API exports),
                          <br />
                          reports, and stats:
                        </Heading>
                        <Right $top={12}>
                          <div>
                            <RightLabel $gap={8}>
                              <Icon name="exports" />
                              Data Exports
                            </RightLabel>
                            <Note $indent={8} $top={5}>
                              * De-identified means that all
                              <br />
                              free-form text fields will be
                              <br />
                              removed, as well as any
                              <br />
                              date/time fields and Identifier
                              <br />
                              fields.
                            </Note>
                          </div>
                          <Options>
                            <Option>
                              <RadioShell />
                              No Access
                            </Option>
                            <Option>
                              <RadioShell $on />
                              De-Identified*
                            </Option>
                            <Option $multi>
                              <RadioShell />
                              <span>
                                Remove all tagged
                                <br />
                                Identifier fields
                              </span>
                            </Option>
                            <Option>
                              <RadioShell />
                              Full Data Set
                            </Option>
                          </Options>
                        </Right>
                        <Right $top={9}>
                          <div>
                            <RightLabel>
                              <Icon name="report" />
                              Add / Edit Reports
                            </RightLabel>
                            <Note $indent={2} $top={0}>
                              Also allows user to view ALL
                              <br />
                              reports (but not necessarily all
                              <br />
                              data in the reports)
                            </Note>
                          </div>
                          <CheckBox on nudge={1} />
                        </Right>
                        <Right $top={11}>
                          <RightLabel>
                            <Icon name="chart" />
                            Stats &amp; Charts
                          </RightLabel>
                          <CheckBox on nudge={1} />
                        </Right>
                        <Rule $top={6} />
                        <Heading $top={6}>Other privileges:</Heading>
                        <RowGroup $top={5}>
                          {otherPrivileges.map((row) => (
                            <PlainRow key={row.label} {...row} />
                          ))}
                        </RowGroup>
                        <Right $top={4}>
                          <div>
                            <RightLabel>
                              <Icon name="quality" />
                              Data Quality
                            </RightLabel>
                            <SmallLink>What is Data Quality?</SmallLink>
                          </div>
                          <Options $top={1}>
                            <Option>
                              <CheckBox />
                              Create &amp; edit rules
                            </Option>
                            <Option>
                              <CheckBox />
                              Execute rules
                            </Option>
                          </Options>
                        </Right>
                        <Right $top={8}>
                          <div>
                            <RightLabel>
                              <Icon name="api" />
                              API
                            </RightLabel>
                            <SmallLink>What is the REDCap API?</SmallLink>
                          </div>
                          <Options $top={1}>
                            <Option>
                              <CheckBox on />
                              API Export
                            </Option>
                            <Option>
                              <CheckBox />
                              API Import
                            </Option>
                          </Options>
                        </Right>
                        <Rule $top={5} />
                        <Heading $top={6}>
                          Settings pertaining to project records:
                          <HeadingLink>Explain these settings</HeadingLink>
                        </Heading>
                        <RowGroup $top={5}>
                          {recordRows.map((row) => (
                            <PlainRow key={row.label} {...row} />
                          ))}
                        </RowGroup>
                      </BasicPanel>
                    </BasicColumn>
                    <EntryColumn>
                      <RightsTab $width={136} $danger>
                        Data Entry Rights
                      </RightsTab>
                      <EntryPanel>
                        <EntryNote>
                          NOTE: The data entry rights *only* pertain to a user's
                          <br />
                          ability to view or edit data on a web page in REDCap
                          <br />
                          (e.g., data entry forms, reports). It has no effect on
                          <br />
                          data imports or data exports.
                        </EntryNote>
                        <EntryGrid>
                          <EntryLabelCell />
                          <EntryHeads>
                            <span>
                              No
                              <br />
                              Access
                            </span>
                            <span>
                              Read
                              <br />
                              Only
                            </span>
                            <span>
                              View
                              <br />
                              &amp; Edit
                            </span>
                          </EntryHeads>
                          <EntryLabelCell $line>Visit</EntryLabelCell>
                          <EntryRadios>
                            <RadioShell />
                            <RadioShell $on />
                            <RadioShell />
                          </EntryRadios>
                        </EntryGrid>
                      </EntryPanel>
                    </EntryColumn>
                  </Columns>
                </ScrollPane>
                <PaneScrollbar>
                  <ArrowUp />
                  <PaneThumb />
                  <ArrowDown />
                </PaneScrollbar>
              </DialogBody>
              <DialogFoot>
                <Button $primary>Add user</Button>
                <Button>Cancel</Button>
                <Grip viewBox="0 0 8 8">
                  <path d="M0 8l8-8M4 8l4-4" stroke="#666" />
                </Grip>
              </DialogFoot>
            </Dialog>
          </Page>
          <Scrollbar>
            <ArrowUp />
            <PageThumb />
            <ArrowDown />
          </Scrollbar>
        </ViewportRow>
        <HScrollbar>
          <ArrowLeft />
          <HThumb />
          <ArrowRight />
        </HScrollbar>
      </Frame>
    </Window>
  );
}
